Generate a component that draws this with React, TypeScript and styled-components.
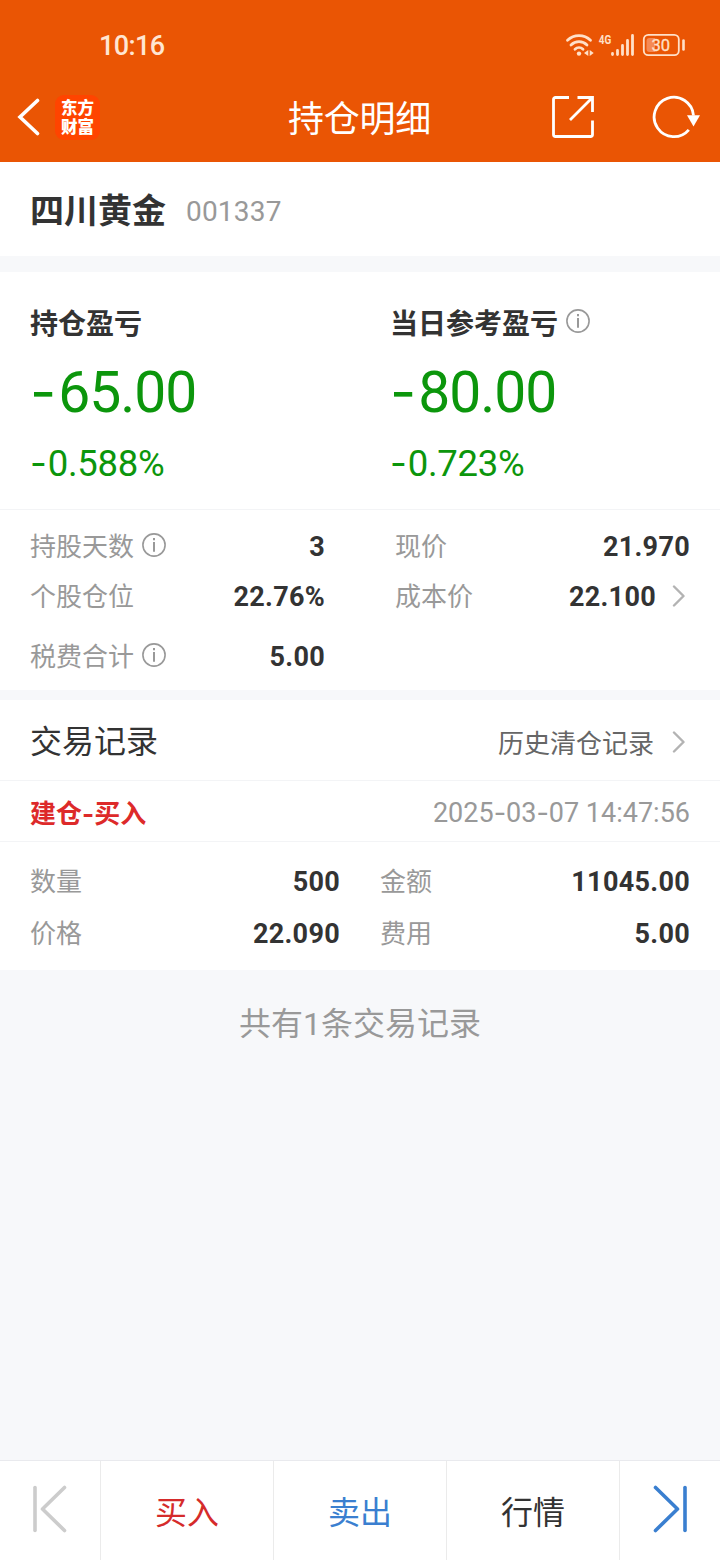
import React from "react";
import styled, { createGlobalStyle } from "styled-components";

const Global = createGlobalStyle`
  * { box-sizing: border-box; }
  html, body { margin: 0; padding: 0; background: #f7f8fa; }
  body { font-family: Roboto, "Noto Sans CJK SC", sans-serif; color: #333; }
`;

const Screen = styled.div`
  width: 720px;
  height: 1560px;
  display: flex;
  flex-direction: column;
  background: #f7f8fa;
  white-space: nowrap;
`;

const Header = styled.header`
  height: 162px;
  background: #ea5504;
  color: #fff;
`;

const StatusBar = styled.div`
  height: 72px;
  padding: 17px 34px 0 99px;
  display: flex;
  align-items: center;
  justify-content: space-between;
`;

const Clock = styled.span`
  padding-top: 2px;
  font-size: 27px;
  line-height: 36px;
  font-weight: 500;
  letter-spacing: -0.6px;
  color: #ffe6d2;
`;

const NavBar = styled.div`
  height: 90px;
  display: grid;
  grid-template-columns: 200px 1fr 200px;
  align-items: center;
`;

const NavLeft = styled.div`
  display: flex;
  align-items: center;
  gap: 14px;
  padding-left: 17px;
`;

const Logo = styled.div`
  width: 45px;
  height: 45px;
  border-radius: 9px;
  background: #ff4400;
  display: flex;
  flex-direction: column;
  align-items: center;
  justify-content: center;
  padding-bottom: 1px;
  font: 900 16.5px/19px "Noto Sans CJK SC", sans-serif;
`;

const Title = styled.h1`
  margin: 0;
  padding: 6px 1px 0 0;
  text-align: center;
  font-size: 36px;
  line-height: 50px;
  font-weight: 400;
  letter-spacing: -0.2px;
`;

const NavRight = styled.div`
  display: flex;
  align-items: center;
  justify-content: space-between;
  padding: 0 20px 0 31px;
`;

const StockBar = styled.section`
  height: 94px;
  padding: 4px 30px 0;
  display: flex;
  align-items: center;
  gap: 20px;
  background: #fff;
`;

const StockName = styled.span`
  font-size: 34px;
  line-height: 44px;
  font-weight: 700;
`;

const StockCode = styled.span`
  padding-top: 1px;
  font-size: 28px;
  line-height: 44px;
  letter-spacing: 0.2px;
  color: #999;
`;

const Profits = styled.section`
  margin-top: 16px;
  height: 238px;
  padding: 29px 30px 0;
  display: grid;
  grid-template-columns: 360px 1fr;
  background: #fff;
  border-bottom: 1px solid #f3f4f6;
`;

const ProfitTitle = styled.div`
  display: flex;
  align-items: center;
  gap: 8px;
  height: 41px;
  font-size: 28px;
  font-weight: 700;

  svg {
    margin-bottom: 1px;
  }
`;

const Figure = styled.div<{ $size: number; $height: number; $spacing: number }>`
  font-size: ${(p) => p.$size}px;
  line-height: ${(p) => p.$height}px;
  letter-spacing: ${(p) => p.$spacing}px;
  color: #0c960c;
`;

const Dash = styled.span<{ $gap?: number }>`
  margin-right: ${(p) => p.$gap || 0}px;
  font-family: Inter, sans-serif;
  letter-spacing: 0;
`;

const Stats = styled.section`
  height: 180px;
  padding: 12px 30px 0;
  display: grid;
  grid-template-columns: 295px 295px;
  grid-template-rows: 50px 50px 70px;
  column-gap: 70px;
  background: #fff;
`;

const Row = styled.div`
  display: flex;
  align-items: center;
  justify-content: space-between;
`;

const Label = styled.span`
  display: flex;
  align-items: center;
  gap: 8px;
  font-size: 26px;
  line-height: 40px;
  color: #999;

  svg {
    margin-bottom: 4px;
  }
`;

const Value = styled.span<{ $link?: boolean }>`
  display: flex;
  align-items: center;
  gap: 16px;
  padding-right: ${(p) => (p.$link ? 4 : 0)}px;
  font-size: 27px;
  line-height: 40px;
  font-weight: 700;
  letter-spacing: 0.3px;

  svg {
    margin-bottom: 3px;
  }
`;

const RecordsHead = styled.section`
  margin-top: 10px;
  height: 81px;
  padding: 0 30px;
  display: flex;
  align-items: center;
  justify-content: space-between;
  background: #fff;
  border-bottom: 1px solid #f3f4f6;
`;

const RecordsTitle = styled.span`
  padding-bottom: 2px;
  font-size: 32px;
`;

const HistoryLink = styled.span`
  display: flex;
  align-items: center;
  gap: 18px;
  padding: 3px 4px 0 0;
  font-size: 26px;
  color: #666;
`;

const RecordBar = styled.div`
  height: 61px;
  padding: 0 30px;
  display: flex;
  align-items: center;
  justify-content: space-between;
  background: #fff;
  border-bottom: 1px solid #f3f4f6;
`;

const Side = styled.span`
  font-size: 26px;
  font-weight: 700;
  color: #dd2a2a;
`;

const Time = styled.span`
  padding-top: 3px;
  font-size: 27px;
  letter-spacing: 0;
  color: #999;
`;

const RecordGrid = styled.div`
  height: 128px;
  padding: 14px 30px 0;
  display: grid;
  grid-template-columns: 310px 310px;
  grid-template-rows: 52px 52px;
  column-gap: 40px;
  background: #fff;
`;

const Summary = styled.div`
  flex: 1;
  padding-top: 31px;
  text-align: center;
  font-size: 32px;
  line-height: 46px;
  color: #999;
`;

const BottomBar = styled.nav`
  height: 100px;
  display: grid;
  grid-template-columns: 101px 173px 173px 173px 100px;
  background: #fff;
  border-top: 1px solid #e9eaee;
`;

const Tab = styled.div<{ $color?: string }>`
  display: flex;
  align-items: center;
  justify-content: center;
  padding-bottom: 1px;
  font-size: 32px;
  color: ${(p) => p.$color || "#333"};

  &:not(:last-child) {
    border-right: 1px solid #ebebeb;
  }

  svg {
    margin-bottom: 2px;
  }
`;

const Info = () => (
  <svg width="24" height="24" viewBox="0 0 24 24" fill="none" stroke="#999">
    <circle cx="12" cy="12" r="11.1" strokeWidth="1.6" />
    <path d="M12 9v9.700" strokeWidth="2" />
    <path d="M12 5v2.200" strokeWidth="2" />
  </svg>
);

const Chevron = () => (
  <svg width="14" height="22" viewBox="0 0 14 22" fill="none" stroke="#b3b3b3" strokeWidth="2.4" strokeLinecap="round" strokeLinejoin="round">
    <path d="M2 1.500L11.500 11L2 20.500" />
  </svg>
);

const StatusIcons = () => (
  <svg width="122" height="26" viewBox="564 31 122 26" fill="none" stroke="#ffe0c8" strokeLinecap="round">
    <path d="M567.500 39.300a16.500 16.500 0 0 1 23 0" strokeWidth="2.800" />
    <path d="M571 44a11.400 11.400 0 0 1 16 0" strokeWidth="2.800" />
    <path d="M575 48.300a5.800 5.800 0 0 1 8 0" strokeWidth="2.800" />
    <circle cx="579" cy="52.600" r="2.200" fill="#ffe0c8" stroke="none" />
    <path d="M588.300 49v6l-4.300-3zM589.700 49v6l4-3z" fill="#ffe0c8" stroke="none" />
    <text x="598.800" y="43" fontFamily="Roboto, sans-serif" fontWeight="700" fontSize="13.500" textLength="12.500" lengthAdjust="spacingAndGlyphs" fill="#ffe0c8" stroke="none">4G</text>
    <path d="M612.500 52.500v1M617.500 49.500v4M622.500 44.500v9M627.500 39.500v14M632.500 34.500v19" strokeWidth="2.800" />
    <rect x="643.800" y="33.800" width="35" height="20.400" rx="4.500" strokeWidth="1.800" />
    <path d="M649.500 37H655v14h-5.500a3 3 0 0 1-3-3v-8a3 3 0 0 1 3-3z" fill="#f58a55" stroke="none" />
    <path d="M683.500 39.500v9" strokeWidth="2.600" />
    <text x="660.800" y="49.800" textAnchor="middle" fontFamily="Roboto, sans-serif" fontSize="16.500" fill="#ffe0c8" stroke="#ffe0c8" strokeWidth="0.300">30</text>
  </svg>
);

const Back = () => (
  <svg width="24" height="38" viewBox="0 0 24 38" fill="none" stroke="#fff" strokeWidth="3.600" strokeLinecap="round">
    <path d="M20.500 2.500L3 19L20.500 35.500" />
  </svg>
);

const Share = () => (
  <svg width="44" height="44" viewBox="0 0 44 44" fill="none" stroke="#fff" strokeWidth="2.800">
    <path d="M18 2.500H4.500a2 2 0 0 0-2 2V39.500a2 2 0 0 0 2 2H39.500a2 2 0 0 0 2-2V25.500" />
    <path d="M26.500 2.500H41.500V17M41 3L19 25" />
  </svg>
);

const Refresh = () => (
  <svg width="48" height="44" viewBox="0 0 48 44" fill="none" stroke="#fff" strokeWidth="2.800">
    <path d="M36.800 34.800A19.700 19.700 0 1 1 41.500 20.500" />
    <path d="M35 20.300H48L41.500 31.500z" fill="#fff" stroke="none" />
  </svg>
);

const Skip = ({ color, flip }: { color: string; flip?: boolean }) => (
  <svg width="36" height="48" viewBox="0 0 36 48" fill="none" stroke={color} strokeWidth="3.600" strokeLinecap="round" strokeLinejoin="round">
    <g transform={flip ? "translate(36 0) scale(-1 1)" : undefined}>
      <path d="M3 2.500V45.500" />
      <path d="M32.500 2.500L10.500 24L32.500 45.500" />
    </g>
  </svg>
);

const Profit = ({ title, amount, rate, info }: { title: string; amount: string; rate: string; info?: boolean }) => (
  <div>
    <ProfitTitle>{title}{info && <Info />}</ProfitTitle>
    <Figure $size={57} $height={100} $spacing={-1}><Dash $gap={2}>-</Dash>{amount}</Figure>
    <Figure $size={36.5} $height={41} $spacing={-0.3}><Dash $gap={1}>-</Dash>{rate}</Figure>
  </div>
);

const Item = ({ label, value, info, more }: { label: string; value: string; info?: boolean; more?: boolean }) => (
  <Row>
    <Label>{label}{info && <Info />}</Label>
    <Value $link={more}>{value}{more && <Chevron />}</Value>
  </Row>
);

export default function App() {
  return (
    <Screen>
      <Global />
      <Header>
        <StatusBar><Clock>10:16</Clock><StatusIcons /></StatusBar>
        <NavBar>
          <NavLeft><Back /><Logo><span>东方</span><span>财富</span></Logo></NavLeft>
          <Title>持仓明细</Title>
          <NavRight><Share /><Refresh /></NavRight>
        </NavBar>
      </Header>
      <StockBar><StockName>四川黄金</StockName><StockCode>001337</StockCode></StockBar>
      <Profits>
        <Profit title="持仓盈亏" amount="65.00" rate="0.588%" />
        <Profit title="当日参考盈亏" amount="80.00" rate="0.723%" info />
      </Profits>
      <Stats>
        <Item label="持股天数" value="3" info />
        <Item label="现价" value="21.970" />
        <Item label="个股仓位" value="22.76%" />
        <Item label="成本价" value="22.100" more />
        <Item label="税费合计" value="5.00" info />
      </Stats>
      <RecordsHead>
        <RecordsTitle>交易记录</RecordsTitle>
        <HistoryLink>历史清仓记录<Chevron /></HistoryLink>
      </RecordsHead>
      <RecordBar>
        <Side>建仓<Dash>-</Dash>买入</Side>
        <Time>2025<Dash>-</Dash>03<Dash>-</Dash>07 14:47:56</Time>
      </RecordBar>
      <RecordGrid>
        <Item label="数量" value="500" />
        <Item label="金额" value="11045.00" />
        <Item label="价格" value="22.090" />
        <Item label="费用" value="5.00" />
      </RecordGrid>
      <Summary>共有1条交易记录</Summary>
      <BottomBar>
        <Tab><Skip color="#ccc" /></Tab>
        <Tab $color="#d52b2b">买入</Tab>
        <Tab $color="#3a7fd0">卖出</Tab>
        <Tab>行情</Tab>
        <Tab><Skip color="#3a7fd0" flip /></Tab>
      </BottomBar>
    </Screen>
  );
}
